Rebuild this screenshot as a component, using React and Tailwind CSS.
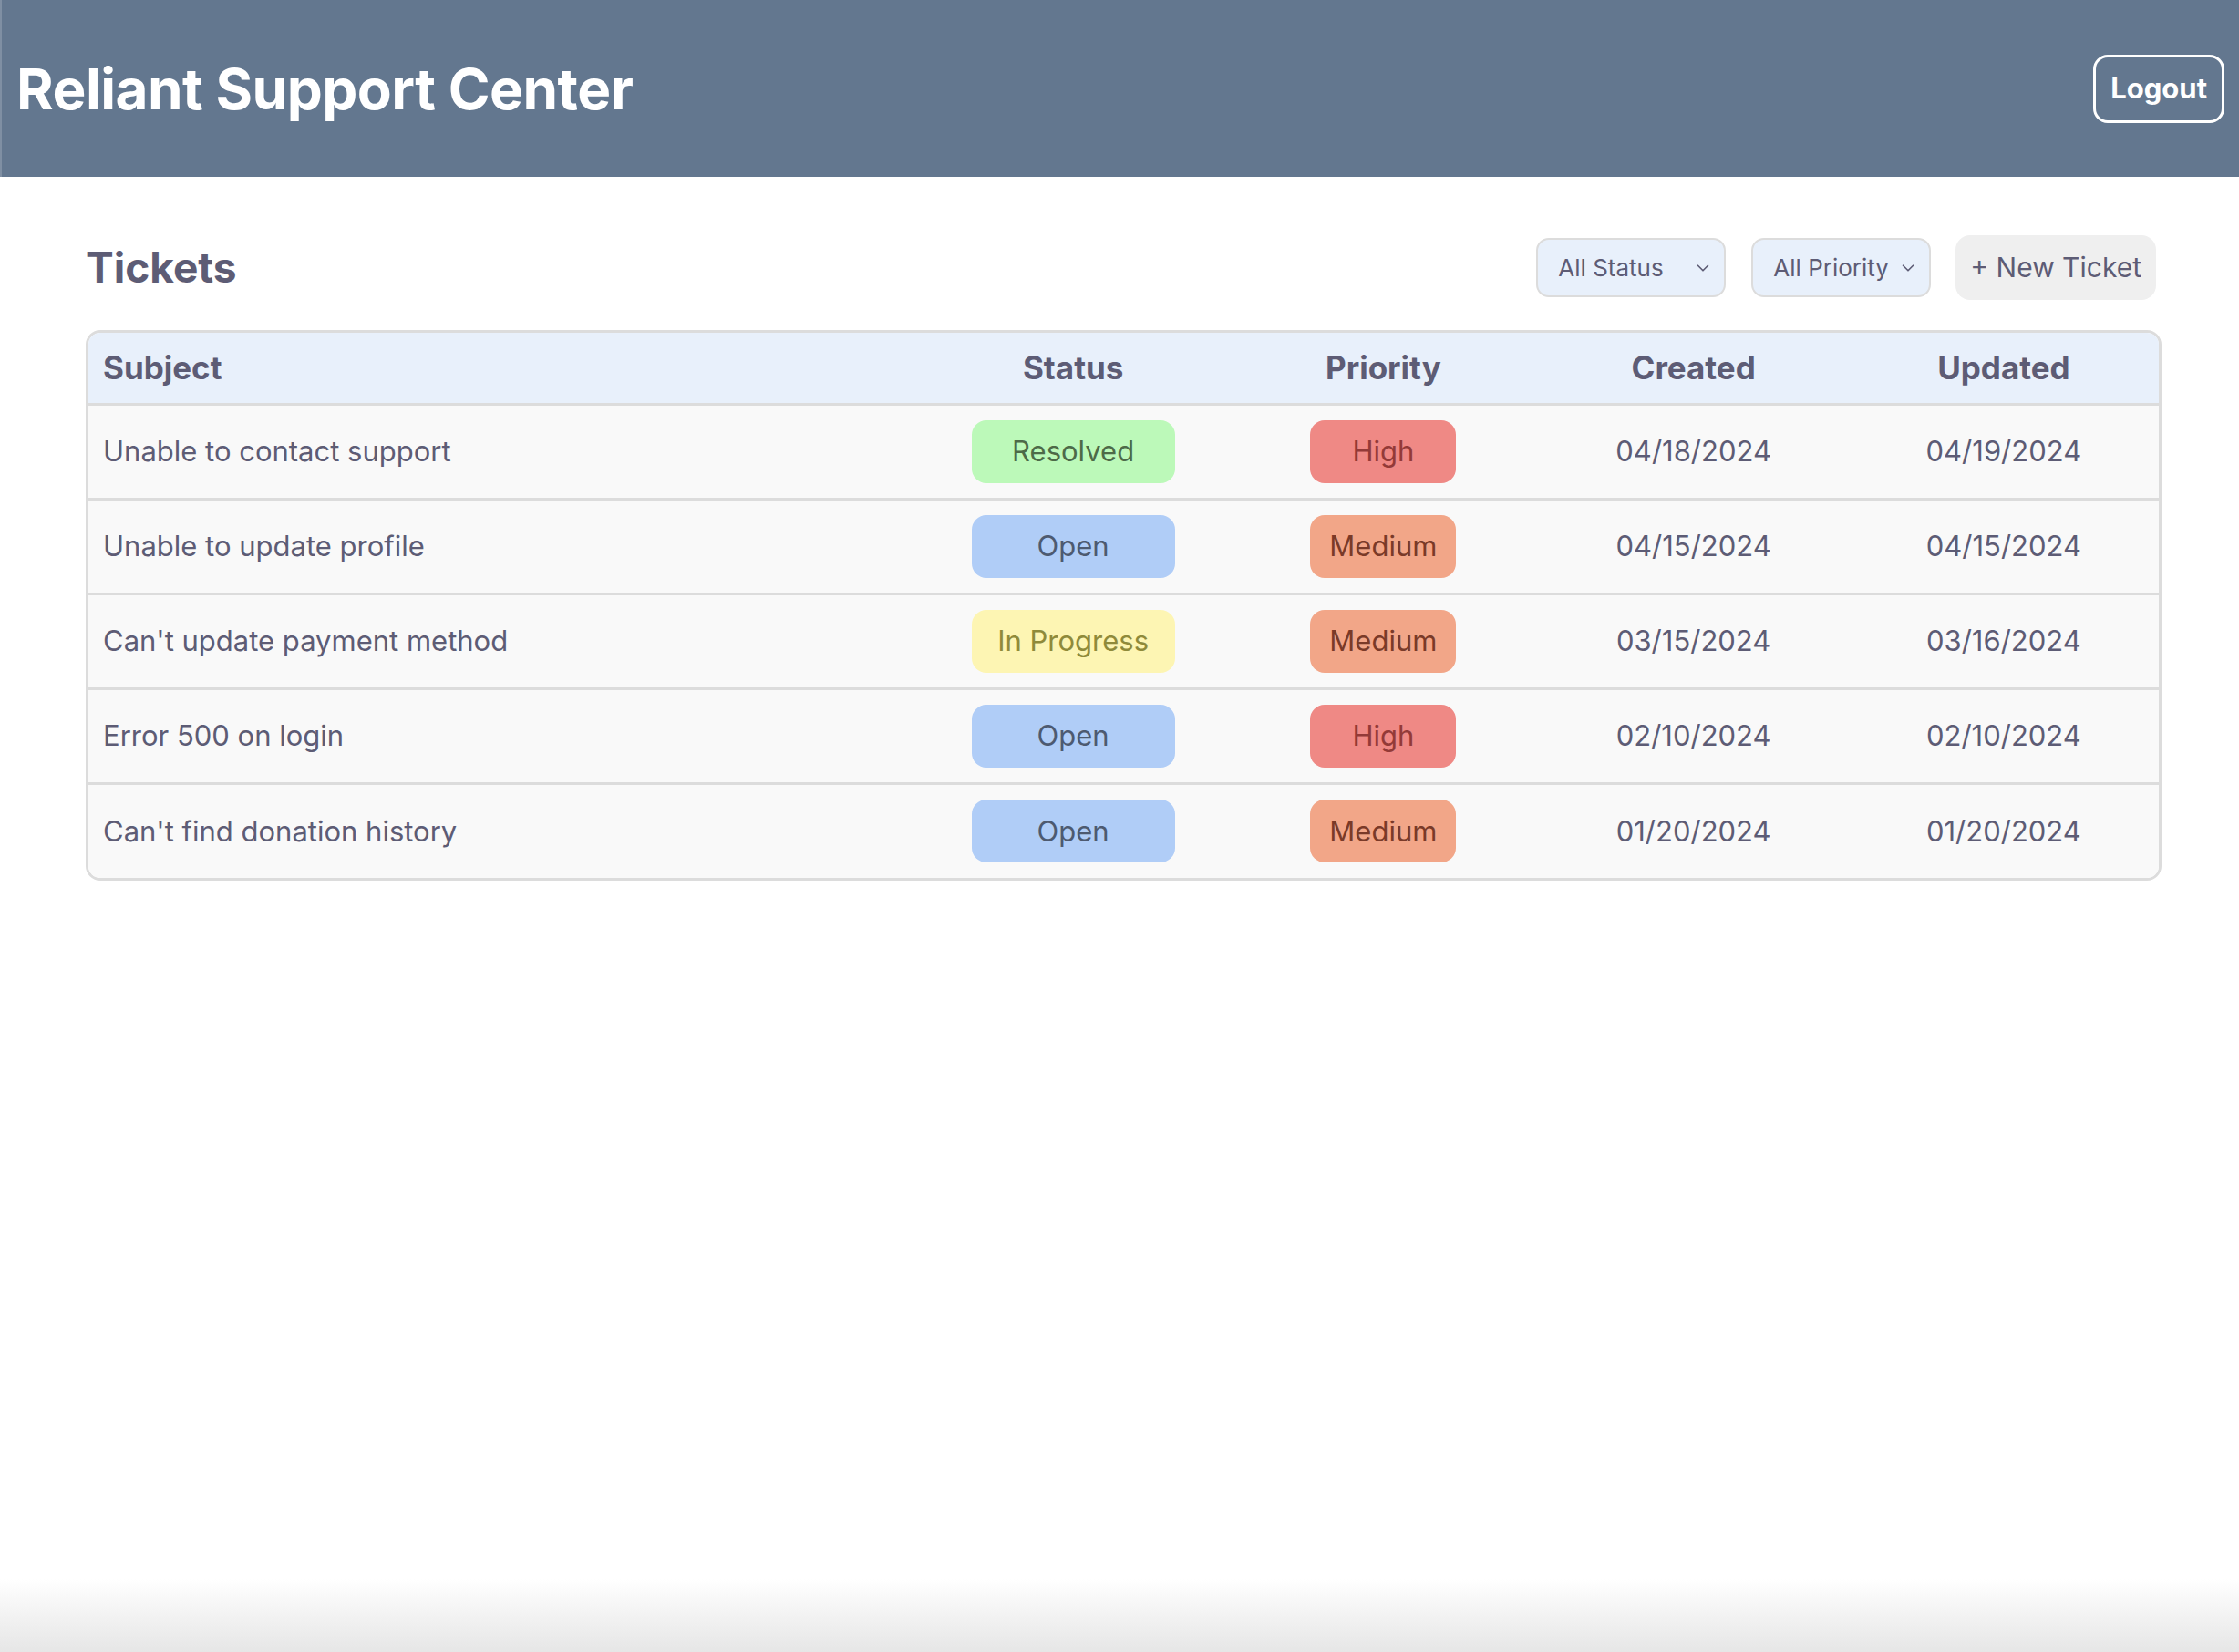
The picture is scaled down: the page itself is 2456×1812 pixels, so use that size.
import { ChevronDown } from 'lucide-react';

const tickets = [
  { subject: 'Unable to contact support', status: 'Resolved', priority: 'High', created: '04/18/2024', updated: '04/19/2024' },
  { subject: 'Unable to update profile', status: 'Open', priority: 'Medium', created: '04/15/2024', updated: '04/15/2024' },
  { subject: "Can't update payment method", status: 'In Progress', priority: 'Medium', created: '03/15/2024', updated: '03/16/2024' },
  { subject: 'Error 500 on login', status: 'Open', priority: 'High', created: '02/10/2024', updated: '02/10/2024' },
  { subject: "Can't find donation history", status: 'Open', priority: 'Medium', created: '01/20/2024', updated: '01/20/2024' },
];

const statusStyles = {
  Resolved: 'bg-[#bcf9b9] text-[#4d6a48]',
  Open: 'bg-[#b0cdf7] text-[#4d5a70]',
  'In Progress': 'bg-[#fdf5b3] text-[#8f8a3a]',
};

const priorityStyles = {
  High: 'bg-[#ef8985] text-[#933a38]',
  Medium: 'bg-[#f2a688] text-[#7a3a28]',
};

function FilterSelect({ label, width }) {
  return (
    <div
      className={`flex items-center justify-between h-[65px] pl-[22px] pr-[12px] bg-[#e8f0fb] border-2 border-[#dcdcdc] rounded-[14px] text-[26px] text-[#5d5c75] ${width}`}
    >
      <span>{label}</span>
      <ChevronDown className="w-[22px] h-[22px] text-[#5d5c75]" strokeWidth={1.8} />
    </div>
  );
}

export default function App() {
  return (
    <div className="min-h-[1812px] flex flex-col bg-white font-['Inter',sans-serif] text-[#5d5c75]">
      <header className="h-[194px] flex items-center justify-between pl-[16px] pr-[16px] bg-[#63778f] border-l-2 border-[#7f8fa3]">
        <h1 className="text-[62px] font-bold text-white tracking-[-0.5px]">Reliant Support Center</h1>
        <button className="h-[75px] px-[16px] border-[3px] border-white rounded-[16px] text-[31px] font-bold text-white">
          Logout
        </button>
      </header>

      <main className="pl-[94px] pr-[85px] pt-[64px]">
        <div className="flex items-center justify-between h-[71px]">
          <h2 className="text-[46px] font-bold text-[#5d5c75]">Tickets</h2>
          <div className="flex items-center mr-[6px]">
            <FilterSelect label="All Status" width="w-[208px]" />
            <div className="ml-[28px]">
              <FilterSelect label="All Priority" width="w-[197px]" />
            </div>
            <button className="ml-[27px] h-[71px] px-[16px] bg-[#efefef] rounded-[16px] text-[30px] text-[#5d5c75]">
              + New Ticket
            </button>
          </div>
        </div>

        <div className="mt-[33px] border-[3px] border-[#dcdcdc] rounded-[16px] overflow-hidden">
          <table className="w-full border-collapse table-fixed">
            <colgroup>
              <col className="w-[910px]" />
              <col />
              <col />
              <col />
              <col />
            </colgroup>
            <thead className="bg-[#e8f0fb]">
              <tr className="h-[78px] border-b-[3px] border-[#dcdcdc]">
                <th className="pl-[16px] text-left text-[35px] font-bold">Subject</th>
                <th className="text-center text-[35px] font-bold">Status</th>
                <th className="text-center text-[35px] font-bold">Priority</th>
                <th className="text-center text-[35px] font-bold">Created</th>
                <th className="text-center text-[35px] font-bold">Updated</th>
              </tr>
            </thead>
            <tbody className="bg-[#f9f9f9]">
              {tickets.map((t, i) => (
                <tr
                  key={t.subject}
                  className={`h-[104px] ${i < tickets.length - 1 ? 'border-b-[3px] border-[#dcdcdc]' : ''}`}
                >
                  <td className="pl-[16px] text-[31px]">{t.subject}</td>
                  <td className="text-center">
                    <span
                      className={`inline-flex items-center justify-center w-[223px] h-[69px] rounded-[16px] text-[31px] ${statusStyles[t.status]}`}
                    >
                      {t.status}
                    </span>
                  </td>
                  <td className="text-center">
                    <span
                      className={`inline-flex items-center justify-center w-[160px] h-[69px] rounded-[16px] text-[31px] ${priorityStyles[t.priority]}`}
                    >
                      {t.priority}
                    </span>
                  </td>
                  <td className="text-center text-[31px]">{t.created}</td>
                  <td className="text-center text-[31px]">{t.updated}</td>
                </tr>
              ))}
            </tbody>
          </table>
        </div>
      </main>

      <div className="flex-1" />
      <div className="h-[80px] bg-gradient-to-b from-white to-[#e6e6e6]" />
    </div>
  );
}
